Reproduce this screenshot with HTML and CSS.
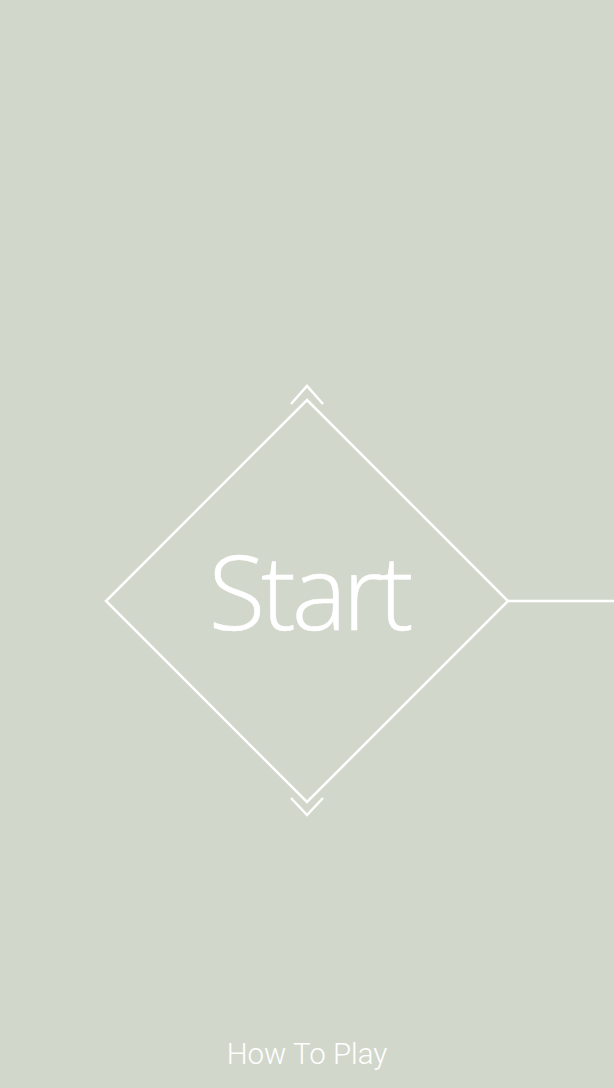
FILE: index.html
```html
<!DOCTYPE html>
<html>
<head>
<meta charset="utf-8">
<link rel="stylesheet" href="styles.css">
</head>
<body>
<div class="screen">
  <div class="board">
    <svg class="shape" width="614" height="440" viewBox="0 0 614 440">
      <g fill="none" stroke="#ffffff" stroke-width="2.5">
        <polyline points="291,24 307,6 323,24"/>
        <polygon points="307,20 508,221 307,422 106,221"/>
        <line x1="508" y1="221" x2="614" y2="221"/>
        <polyline points="291,418 307,435 323,418"/>
      </g>
    </svg>
    <div class="start">Start</div>
  </div>
  <div class="howto">How To Play</div>
</div>
</body>
</html>
```
FILE: styles.css
```css
html, body {
  margin: 0;
  padding: 0;
  background: #d2d7cc;
}
.screen {
  width: 614px;
  height: 1088px;
  display: flex;
  flex-direction: column;
  align-items: stretch;
  overflow: hidden;
}
.board {
  position: relative;
  margin-top: 380px;
  height: 440px;
}
.shape {
  display: block;
}
.start {
  position: absolute;
  left: 0;
  right: 0;
  top: 150px;
  padding-left: 4px;
  text-align: center;
  font-family: "Open Sans", sans-serif;
  font-weight: 300;
  font-size: 104px;
  letter-spacing: -4.2px;
  line-height: 120px;
  color: #ffffff;
  -webkit-text-stroke: 0.6px #ffffff;
}
.howto {
  margin-top: auto;
  margin-bottom: 16px;
  text-align: center;
  font-family: Roboto, "Liberation Sans", sans-serif;
  font-weight: 300;
  font-size: 29.5px;
  line-height: 36px;
  color: #ffffff;
}
```
